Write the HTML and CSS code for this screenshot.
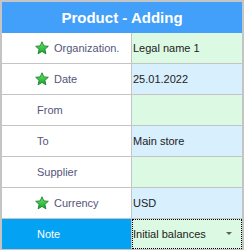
FILE: index.html
```html
<!DOCTYPE html>
<html lang="en">
<head>
    <meta charset="UTF-8">
    <title>Product - Adding</title>
    <link rel="stylesheet" href="styles.css">
</head>
<body>
    <div class="window">
        <div class="title">Product - Adding</div>

        <div class="row">
            <div class="label"><svg class="star" viewBox="0 0 14 14"><use href="#star"/></svg>Organization.</div>
            <div class="value green">Legal name 1</div>
        </div>
        <div class="row">
            <div class="label"><svg class="star" viewBox="0 0 14 14"><use href="#star"/></svg>Date</div>
            <div class="value blue">25.01.2022</div>
        </div>
        <div class="row">
            <div class="label plain">From</div>
            <div class="value green"></div>
        </div>
        <div class="row">
            <div class="label plain">To</div>
            <div class="value blue">Main store</div>
        </div>
        <div class="row">
            <div class="label plain">Supplier</div>
            <div class="value green"></div>
        </div>
        <div class="row">
            <div class="label"><svg class="star" viewBox="0 0 14 14"><use href="#star"/></svg>Currency</div>
            <div class="value blue">USD</div>
        </div>
        <div class="row selected">
            <div class="label plain">Note</div>
            <div class="value green focus">Initial balances<span class="arrow"></span></div>
        </div>
    </div>

    <svg width="0" height="0" style="position:absolute">
        <defs>
            <linearGradient id="starFill" x1="0" y1="0" x2="0" y2="1">
                <stop offset="0" stop-color="#6ee86a"/>
                <stop offset="1" stop-color="#12a52a"/>
            </linearGradient>
            <symbol id="star" viewBox="0 0 14 14">
                <path d="M7 0.8 L8.8 4.9 L13.3 5.3 L9.9 8.3 L10.9 12.8 L7 10.4 L3.1 12.8 L4.1 8.3 L0.7 5.3 L5.2 4.9 Z"
                      fill="url(#starFill)" stroke="#1d7f2b" stroke-width="0.9" stroke-linejoin="round"/>
            </symbol>
        </defs>
    </svg>
</body>
</html>
```

FILE: styles.css
```css
body {
    margin: 0;
    font-family: "Liberation Sans", Arial, sans-serif;
}

.window {
    width: 240px;
    border: 2px solid #c4c4c4;
    border-bottom: 0;
    background: #fff;
}

.title {
    height: 31px;
    background-color: #42a0fa;
    color: #fff;
    font-size: 15px;
    font-weight: bold;
    display: flex;
    align-items: center;
    justify-content: center;
}

.row {
    display: flex;
    height: 30px;
    border-bottom: 1px solid #c4c4c4;
}

.label {
    width: 130px;
    border-right: 1px solid #c4c4c4;
    display: flex;
    align-items: center;
    padding-left: 33px;
    box-sizing: border-box;
    font-size: 11px;
    color: #55557a;
}

.label.plain {
    padding-left: 35px;
}

.star {
    width: 14px;
    height: 14px;
    margin-right: 5px;
}

.value {
    flex: 1;
    display: flex;
    align-items: center;
    padding-left: 1px;
    font-size: 11px;
    color: #222;
}

.green {
    background-color: #dcfae3;
}

.blue {
    background-color: #d8effd;
}

.selected .label {
    background-color: #03a2f2;
    color: #fff;
}

.focus {
    border: 1px dotted #000;
    padding-left: 0;
    position: relative;
}

.arrow {
    position: absolute;
    right: 9px;
    top: 12px;
    border-left: 3px solid transparent;
    border-right: 3px solid transparent;
    border-top: 3px solid #606060;
}
```
